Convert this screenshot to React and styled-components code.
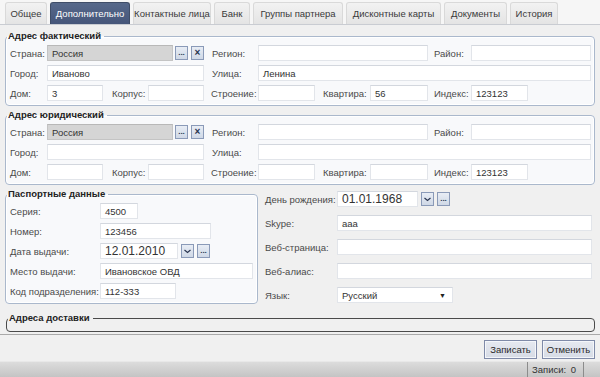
import styled, { createGlobalStyle } from 'styled-components'

const GlobalStyle = createGlobalStyle`
  html, body {
    margin: 0;
    padding: 0;
    background: #f0f0f0;
  }
  body {
    font-family: "Liberation Sans", Arial, sans-serif;
    font-size: 9.5px;
    color: #3c3c3c;
  }
`

const Window = styled.div`
  width: 600px;
  height: 377px;
  display: flex;
  flex-direction: column;
  background: #f0f0f0;
  overflow: hidden;
`

const TabBar = styled.div`
  height: 25px;
  flex: none;
  display: flex;
  align-items: flex-end;
  gap: 3px;
  padding-left: 5px;
  background: #f6f6f6;
  border-bottom: 1px solid #c9ccd2;
  box-sizing: border-box;
`

const Tab = styled.div`
  height: 22px;
  display: flex;
  align-items: center;
  justify-content: center;
  width: ${(p) => p.$w}px;
  border-radius: 3px 3px 0 0;
  border: 1px solid ${(p) => (p.$active ? '#3f4d68' : '#d9d9d9')};
  border-bottom: none;
  box-sizing: border-box;
  background: ${(p) =>
    p.$active ? 'linear-gradient(#56688a, #46567a)' : 'linear-gradient(#f2f2f2, #e4e4e4)'};
  color: ${(p) => (p.$active ? '#ffffff' : '#3a3a3a')};
  white-space: nowrap;
`

const Content = styled.div`
  flex: none;
  padding: 5px 5px 0 5px;
  display: flex;
  flex-direction: column;
`

const Group = styled.fieldset`
  margin: 0 0 3px 0;
  padding: 3px 3px 4px 4px;
  border: 1px solid ${(p) => (p.$dark ? '#4a4a4a' : '#aab8cc')};
  border-radius: 4px;
  background: ${(p) => (p.$dark ? 'transparent' : '#f8f9fb')};
  box-shadow: ${(p) => (p.$dark ? 'none' : 'inset 0 0 0 1px #ffffff')};
  min-width: 0;
  width: ${(p) => (p.$w ? `${p.$w}px` : 'auto')};
  box-sizing: border-box;
`

const Legend = styled.legend`
  padding: 0 3px 0 1px;
  margin-left: -3px;
  font-weight: bold;
  color: #222;
  line-height: 12px;
  font-size: 9.5px;
`

const AddrGrid = styled.div`
  display: grid;
  grid-template-columns: 37px 56px 45px 56px 54px 57px 55px 58px 43px 1fr;
  grid-auto-rows: 16px;
  row-gap: 4px;
`

const Label = styled.div`
  display: flex;
  align-items: center;
  padding-left: ${(p) => p.$indent || 0}px;
  grid-column: ${(p) => p.$col || 'auto'};
  white-space: nowrap;
  color: #4a4a4a;
`

const Field = styled.div`
  height: 16px;
  box-sizing: border-box;
  display: flex;
  align-items: center;
  padding-left: 4px;
  width: ${(p) => (p.$w ? `${p.$w}px` : 'auto')};
  flex: ${(p) => (p.$grow ? 1 : 'none')};
  grid-column: ${(p) => p.$col || 'auto'};
  background: ${(p) => (p.$gray ? '#d5d5d5' : '#ffffff')};
  border: 1px solid ${(p) => (p.$gray ? '#c4c4c4' : '#e2e5ea')};
  border-top-color: ${(p) => (p.$gray ? '#b8b8b8' : '#d3d7de')};
  font-size: ${(p) => (p.$big ? '12px' : '9.5px')};
  color: #333;
  white-space: nowrap;
  overflow: hidden;
`

const FieldWithButtons = styled.div`
  display: flex;
  align-items: center;
  gap: 3px;
  grid-column: ${(p) => p.$col || 'auto'};
`

const MiniButton = styled.div`
  width: 13px;
  height: 14px;
  box-sizing: border-box;
  border: 1px solid #8a9ab8;
  background: linear-gradient(#e8edf5, #cfd8e6);
  display: flex;
  align-items: center;
  justify-content: center;
  font-size: ${(p) => (p.$x ? '10px' : '8px')};
  font-weight: bold;
  color: #2a3550;
  line-height: 1;
`

const Bottom = styled.div`
  display: flex;
  align-items: flex-start;
  gap: 7px;
`

const FormGrid = styled.div`
  display: grid;
  grid-template-columns: ${(p) => p.$label}px 1fr;
  grid-auto-rows: 16px;
  row-gap: ${(p) => p.$gap}px;
  align-items: center;
`

const RightColumn = styled.div`
  flex: 1;
  padding-top: 3px;
  padding-right: 3px;
`

const Select = styled(Field)`
  justify-content: space-between;
  padding-right: 6px;
`

const Arrow = styled.span`
  font-size: 7px;
  color: #222;
`

const Delivery = styled(Group)`
  margin: 5px 0 0 1px;
  height: 20px;
`

const Footer = styled.div`
  flex: none;
  border-top: 1px solid #a9a9a9;
  margin-top: 2px;
  height: 27px;
  display: flex;
  justify-content: flex-end;
  align-items: flex-end;
  gap: 5px;
  padding: 0 5px 2px 0;
  box-sizing: border-box;
`

const ActionButton = styled.div`
  width: 53px;
  height: 19px;
  box-sizing: border-box;
  border: 1px solid #7f8aa8;
  box-shadow: inset 0 0 0 1px #f4f6fa;
  background: linear-gradient(#e6e9f0, #d6dbe5);
  display: flex;
  align-items: center;
  justify-content: center;
  color: #2a2a2a;
`

const StatusBar = styled.div`
  flex: 1;
  background: linear-gradient(#dcdcdc, #c4c4c4);
  border-top: 1px solid #e8e8e8;
  display: flex;
  justify-content: flex-end;
  padding-right: 16px;
`

const StatusCell = styled.div`
  width: 57px;
  border-left: 1px solid #8c8c8c;
  border-right: 1px solid #8c8c8c;
  display: flex;
  align-items: center;
  justify-content: space-between;
  padding: 0 7px 0 4px;
  box-sizing: border-box;
  color: #333;
`

const tabs = [
  ['Общее', 42],
  ['Дополнительно', 80],
  ['Контактные лица', 78],
  ['Банк', 36],
  ['Группы партнера', 90],
  ['Дисконтные карты', 95],
  ['Документы', 63],
  ['История', 48]
]

const Chevron = () => (
  <svg width="7" height="5" viewBox="0 0 7 5">
    <path d="M0.5 1 L3.5 3.5 L6.5 1" fill="none" stroke="#2a3550" strokeWidth="1.2" />
  </svg>
)

function Address({ title, data }) {
  return (
    <Group>
      <Legend>{title}</Legend>
      <AddrGrid>
        <Label>Страна:</Label>
        <FieldWithButtons $col="2 / 5">
          <Field $gray $grow style={{ marginRight: -1 }}>Россия</Field>
          <MiniButton>...</MiniButton>
          <MiniButton $x>×</MiniButton>
        </FieldWithButtons>
        <Label $indent={8}>Регион:</Label>
        <Field $col="6 / 9">{data.region}</Field>
        <Label $indent={6}>Район:</Label>
        <Field>{data.district}</Field>

        <Label>Город:</Label>
        <Field $col="2 / 5">{data.city}</Field>
        <Label $indent={8}>Улица:</Label>
        <Field $col="6 / 11">{data.street}</Field>

        <Label>Дом:</Label>
        <Field>{data.house}</Field>
        <Label $indent={9}>Корпус:</Label>
        <Field>{data.block}</Field>
        <Label $indent={7}>Строение:</Label>
        <Field>{data.building}</Field>
        <Label $indent={8}>Квартира:</Label>
        <Field>{data.flat}</Field>
        <Label $indent={6}>Индекс:</Label>
        <Field $w={57}>{data.zip}</Field>
      </AddrGrid>
    </Group>
  )
}

export default function App() {
  return (
    <>
      <GlobalStyle />
      <Window>
        <TabBar>
          {tabs.map(([name, w], i) => (
            <Tab key={name} $w={w} $active={i === 1}>
              {name}
            </Tab>
          ))}
        </TabBar>
        <Content>
          <Address
            title="Адрес фактический"
            data={{ city: 'Иваново', street: 'Ленина', house: '3', flat: '56', zip: '123123' }}
          />
          <Address title="Адрес юридический" data={{ zip: '123123' }} />

          <Bottom>
            <Group $w={253}>
              <Legend>Паспортные данные</Legend>
              <FormGrid $label={90} $gap={4}>
                <Label>Серия:</Label>
                <Field $w={38}>4500</Field>
                <Label>Номер:</Label>
                <Field $w={111}>123456</Field>
                <Label>Дата выдачи:</Label>
                <FieldWithButtons>
                  <Field $w={78} $big>12.01.2010</Field>
                  <MiniButton><Chevron /></MiniButton>
                  <MiniButton>...</MiniButton>
                </FieldWithButtons>
                <Label>Место выдачи:</Label>
                <Field $w={153}>Ивановское ОВД</Field>
                <Label>Код подразделения:</Label>
                <Field $w={76}>112-333</Field>
              </FormGrid>
            </Group>

            <RightColumn>
              <FormGrid $label={72} $gap={8}>
                <Label>День рождения:</Label>
                <FieldWithButtons>
                  <Field $w={81} $big>01.01.1968</Field>
                  <MiniButton><Chevron /></MiniButton>
                  <MiniButton>...</MiniButton>
                </FieldWithButtons>
                <Label>Skype:</Label>
                <Field>aaa</Field>
                <Label>Веб-страница:</Label>
                <Field />
                <Label>Веб-алиас:</Label>
                <Field />
                <Label>Язык:</Label>
                <Select $w={116}>
                  Русский
                  <Arrow>▼</Arrow>
                </Select>
              </FormGrid>
            </RightColumn>
          </Bottom>

          <Delivery $dark>
            <Legend>Адреса доставки</Legend>
          </Delivery>
        </Content>
        <Footer>
          <ActionButton>Записать</ActionButton>
          <ActionButton>Отменить</ActionButton>
        </Footer>
        <StatusBar>
          <StatusCell>
            <span>Записи:</span>
            <span>0</span>
          </StatusCell>
        </StatusBar>
      </Window>
    </>
  )
}
